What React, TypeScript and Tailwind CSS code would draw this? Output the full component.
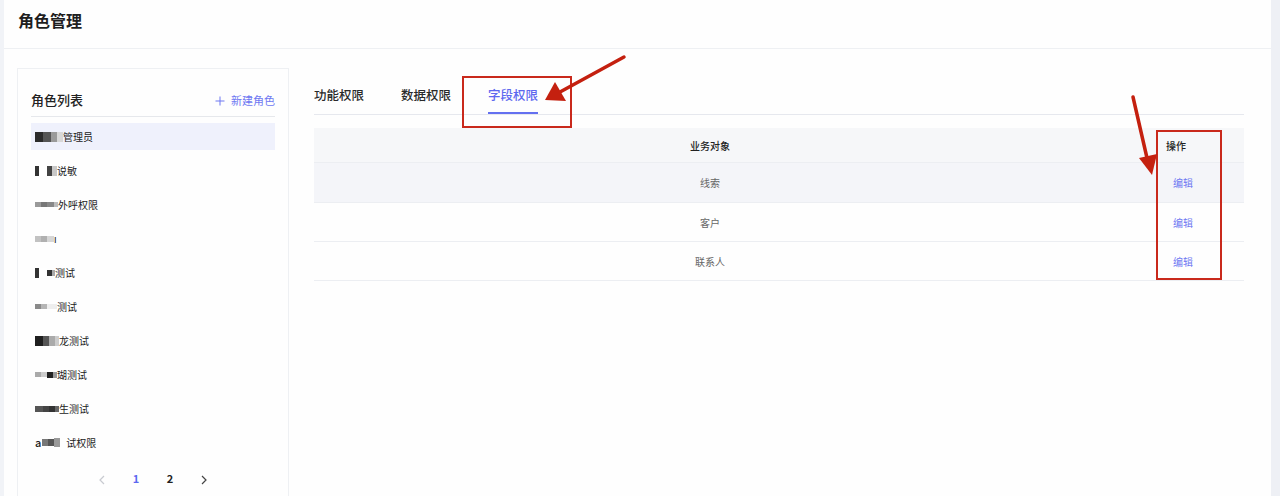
import React from "react";

type Cell = { w: number; c: string; h?: number };

const roles: { mosaic: Cell[]; text: string; gap?: number }[] = [
  { mosaic: [{ w: 8, c: "#2b2b2b" }, { w: 8, c: "#555" }, { w: 6, c: "#9a9a9a" }, { w: 6, c: "#d8d8d8" }], text: "管理员" },
  { mosaic: [{ w: 4, c: "#333" }, { w: 8, c: "#fff" }, { w: 5, c: "#444" }, { w: 5, c: "#c8c8c8" }], text: "说敏" },
  { mosaic: [{ w: 6, c: "#9a9a9a", h: 5 }, { w: 6, c: "#777", h: 5 }, { w: 7, c: "#888", h: 5 }, { w: 4, c: "#bbb", h: 5 }], text: "外呼权限" },
  { mosaic: [{ w: 6, c: "#c2c2c2", h: 6 }, { w: 6, c: "#b0b0b0", h: 6 }, { w: 7, c: "#d6d6d6", h: 6 }], text: "ı" },
  { mosaic: [{ w: 4, c: "#333" }, { w: 8, c: "#fff" }, { w: 5, c: "#333", h: 6 }, { w: 3, c: "#aaa", h: 6 }], text: "测试" },
  { mosaic: [{ w: 6, c: "#8a8a8a", h: 5 }, { w: 6, c: "#b5b5b5", h: 5 }, { w: 10, c: "#eee", h: 5 }], text: "测试" },
  { mosaic: [{ w: 8, c: "#1f1f1f" }, { w: 6, c: "#555" }, { w: 6, c: "#aaa" }, { w: 4, c: "#ccc" }], text: "龙测试" },
  { mosaic: [{ w: 6, c: "#aaa", h: 5 }, { w: 6, c: "#ccc", h: 5 }, { w: 6, c: "#222", h: 6 }, { w: 4, c: "#999", h: 6 }], text: "瑚测试" },
  { mosaic: [{ w: 8, c: "#555", h: 6 }, { w: 6, c: "#444", h: 6 }, { w: 6, c: "#333", h: 6 }, { w: 4, c: "#666", h: 6 }], text: "生测试" },
  { mosaic: [{ w: 6, c: "#777", h: 7 }, { w: 6, c: "#555", h: 7 }, { w: 6, c: "#999", h: 9 }], text: "试权限", gap: 6 },
];

function Mosaic({ cells }: { cells: Cell[] }) {
  return (
    <div className="flex items-center h-[10px]">
      {cells.map((c, i) => (
        <div key={i} style={{ width: c.w, height: c.h ?? 10, background: c.c }} />
      ))}
    </div>
  );
}

const rows = ["线索", "客户", "联系人"];

export default function App() {
  return (
    <div
      className="relative w-full h-[496px] flex bg-[#f1f3f7] overflow-hidden"
      style={{ fontFamily: '"Noto Sans CJK SC", "Noto Sans", sans-serif' }}
    >
      <div className="w-[4px] shrink-0" />
      <div className="w-[1267px] shrink-0 bg-[#fefefe] flex flex-col">
        <div className="h-[49px] shrink-0 border-b border-[#eef0f3] flex items-center pl-[14px] pb-[8px]">
          <h1 className="text-[16px] font-bold text-[#1f1f1f] leading-none">角色管理</h1>
        </div>
        <div className="flex shrink-0 pt-[19px] pl-[13px]">
          {/* left card */}
          <div className="w-[272px] h-[440px] shrink-0 border border-[#eef0f3] px-[13px] pt-[19px]">
            <div className="h-[24px] flex items-center justify-between text-[13px]">
              <span className="font-medium text-[#222]">角色列表</span>
              <span className="flex items-center gap-[6px] text-[11px] text-[#6e78f2]">
                <svg width="10" height="10" viewBox="0 0 10 10" className="mt-[1px]">
                  <path d="M5 0.5v9M0.5 5h9" stroke="#6e78f2" strokeWidth="1" />
                </svg>
                新建角色
              </span>
            </div>
            <div className="mt-[4px] border-b border-[#e6e8ec]" />
            <div className="mt-[6px] flex flex-col gap-[7px]">
              {roles.map((r, i) => (
                <div
                  key={i}
                  className={`h-[27px] flex items-center pl-[4px] text-[10px] text-[#222] ${i === 0 ? "bg-[#eff1fc]" : ""}`}
                >
                  {i === 9 && <span className="text-[11px] font-medium mr-[1px]">a</span>}
                  <Mosaic cells={r.mosaic} />
                  <span style={{ marginLeft: r.gap ?? 0 }}>{r.text}</span>
                </div>
              ))}
            </div>
            <div className="mt-[10px] h-[24px] flex items-center justify-center text-[11px] font-bold">
              <span className="w-[34px] text-center">
                <svg width="6" height="10" viewBox="0 0 6 10" className="inline">
                  <path d="M5 1L1 5l4 4" fill="none" stroke="#c8cad0" strokeWidth="1.2" />
                </svg>
              </span>
              <span className="w-[34px] text-center text-[#5c68f0]">1</span>
              <span className="w-[34px] text-center text-[#222]">2</span>
              <span className="w-[34px] text-center">
                <svg width="6" height="10" viewBox="0 0 6 10" className="inline">
                  <path d="M1 1l4 4-4 4" fill="none" stroke="#444" strokeWidth="1.2" />
                </svg>
              </span>
            </div>
          </div>

          {/* right content */}
          <div className="ml-[25px] w-[930px] shrink-0">
            <div className="h-[47px] flex items-end gap-[37px] border-b border-[#e6e8ee] text-[12.5px] font-medium">
              <div className="pb-[7px] border-b-2 border-transparent text-[#2a2a2a] leading-[20px]">功能权限</div>
              <div className="pb-[7px] border-b-2 border-transparent text-[#2a2a2a] leading-[20px]">数据权限</div>
              <div className="pb-[7px] border-b-2 border-[#6470f0] text-[#5d68ef] leading-[20px]">字段权限</div>
            </div>
            <div className="mt-[13px]">
              <div className="h-[35px] flex items-center bg-[#f6f7f9] border-b border-[#eceef2] text-[10px] font-medium text-[#222]">
                <div className="w-[792px] text-center">业务对象</div>
                <div className="pl-[60px]">操作</div>
              </div>
              {rows.map((r, i) => (
                <div
                  key={r}
                  className={`${i === 0 ? "h-[40px] bg-[#f4f5f9]" : "h-[39px]"} flex items-center border-b border-[#eceef2] text-[10px] text-[#666]`}
                >
                  <div className="w-[792px] text-center">{r}</div>
                  <div className="pl-[67px] text-[#6e78f2]">编辑</div>
                </div>
              ))}
            </div>
          </div>
        </div>
      </div>
      <div className="flex-1 bg-[#eef0f5]" />

      {/* annotations overlay */}
      <div className="absolute left-[462px] top-[76px] w-[110px] h-[52px] border-2 border-[#c9291c]" />
      <div className="absolute left-[1156px] top-[130px] w-[66px] h-[150px] border-2 border-[#c9291c]" />
      <svg className="absolute left-0 top-0 pointer-events-none" width="1280" height="496">
        <line x1="624" y1="57" x2="560" y2="92" stroke="#c4200f" strokeWidth="3.5" strokeLinecap="round" />
        <polygon points="545,100 555,82 566,101" fill="#c4200f" />
        <line x1="1133" y1="97" x2="1147" y2="158" stroke="#c4200f" strokeWidth="3.5" strokeLinecap="round" />
        <polygon points="1152,175 1139,158 1157,154" fill="#c4200f" />
      </svg>
    </div>
  );
}
